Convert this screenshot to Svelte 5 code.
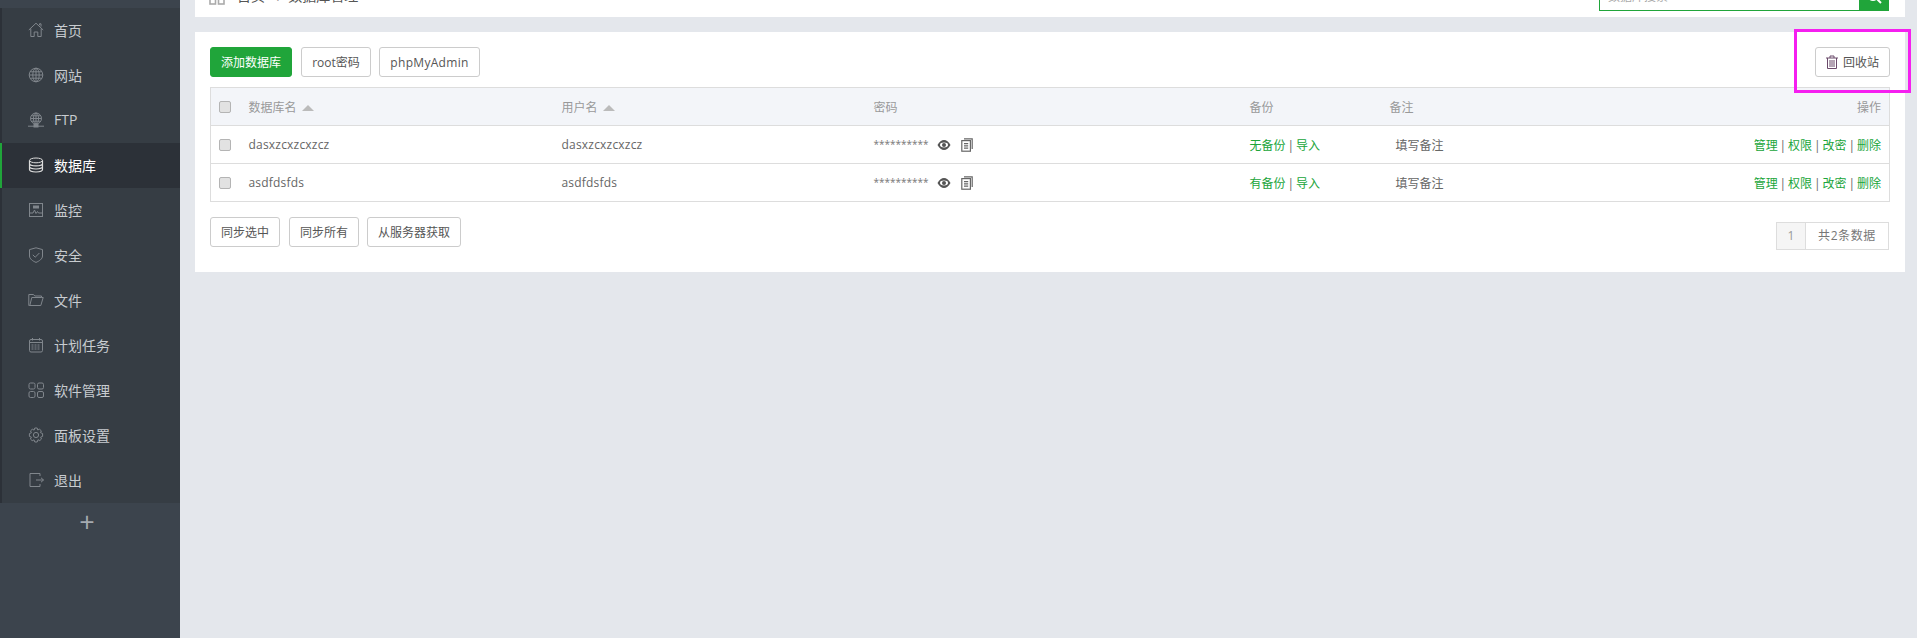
<script>
	const menu = [
		{ label: '首页', icon: 'home' },
		{ label: '网站', icon: 'globe' },
		{ label: 'FTP', icon: 'ftp' },
		{ label: '数据库', icon: 'db', active: true },
		{ label: '监控', icon: 'monitor' },
		{ label: '安全', icon: 'shield' },
		{ label: '文件', icon: 'folder' },
		{ label: '计划任务', icon: 'calendar' },
		{ label: '软件管理', icon: 'apps' },
		{ label: '面板设置', icon: 'gear' },
		{ label: '退出', icon: 'exit' }
	];

	const rows = [
		{ name: 'dasxzcxzcxzcz', user: 'dasxzcxzcxzcz', backup: '无备份' },
		{ name: 'asdfdsfds', user: 'asdfdsfds', backup: '有备份' }
	];

	const actions = ['管理', '权限', '改密', '删除'];
</script>

<div class="page">
	<aside class="sidebar">
		<nav class="menu">
			{#each menu as item (item.label)}
				<a class="menu-item" class:active={item.active} href="#top">
					<svg class="menu-icon" viewBox="0 0 16 16" width="16" height="16" fill="none" stroke="currentColor" stroke-width="1">
						{#if item.icon === 'home'}
							<path d="M0.8 8 8 1.2 15.2 8M2.8 6.6V14.5H6.2V10H9.8V14.5H13.2V6.6M11.5 3.2V1.8H13V4.6" />
						{:else if item.icon === 'globe'}
							<circle cx="8" cy="8" r="6.8" />
							<ellipse cx="8" cy="8" rx="3.2" ry="6.8" />
							<path d="M1.2 8H14.8M2.2 4.8H13.8M2.2 11.2H13.8M8 1.2V14.8" />
						{:else if item.icon === 'ftp'}
							<circle cx="8" cy="6.5" r="5.5" />
							<ellipse cx="8" cy="6.5" rx="2.6" ry="5.5" />
							<path d="M2.5 6.5H13.5M3.4 3.8H12.6M3.4 9.2H12.6M8 1V12M0 14.2H16" />
							<rect x="6" y="12.4" width="4" height="2.6" fill="currentColor" />
						{:else if item.icon === 'db'}
							<ellipse cx="8" cy="3.4" rx="6.5" ry="2.4" />
							<path d="M1.5 3.4V12.6C1.5 14 4.4 15 8 15S14.5 14 14.5 12.6V3.4M1.5 6.5C1.5 7.9 4.4 8.9 8 8.9S14.5 7.9 14.5 6.5M1.5 9.6C1.5 11 4.4 12 8 12S14.5 11 14.5 9.6" stroke-width="1.2" />
						{:else if item.icon === 'monitor'}
							<rect x="1.5" y="1.5" width="13" height="13" />
							<path d="M1.5 11H5L6.5 8 8 11.5 9.5 9.5 10.5 11H14.5" />
							<rect x="5" y="3.5" width="6" height="3" fill="currentColor" stroke="none" />
						{:else if item.icon === 'shield'}
							<path d="M8 0.8 14.5 2.6V9C14.5 12 11 14.2 8 15.4 5 14.2 1.5 12 1.5 9V2.6Z" />
							<path d="M4.8 7.8 7.2 10.2 11.4 6" />
						{:else if item.icon === 'folder'}
							<path d="M1.8 13.5H12.8L15.2 5.5H13.5V4H6.8L5.5 2.5H0.8V13.5ZM1.8 13.5 3.8 5.5H13.5" />
						{:else if item.icon === 'calendar'}
							<rect x="1.5" y="2.5" width="13" height="12.5" rx="1.5" />
							<path d="M1.5 5.5H14.5M4.5 1V3.5M11.5 1V3.5" />
							<path d="M3.5 8H12.5M3.5 10H12.5M3.5 12H12.5" stroke-dasharray="2 1" />
						{:else if item.icon === 'apps'}
							<rect x="1" y="1" width="6" height="6" rx="1.5" />
							<rect x="9.5" y="1" width="6" height="6" rx="1.5" />
							<rect x="1" y="9.5" width="6" height="6" rx="1.5" />
							<rect x="9.5" y="9.5" width="6" height="6" rx="1.5" />
						{:else if item.icon === 'gear'}
							<circle cx="8" cy="8" r="2.6" />
							<path d="M6.8 1H9.2L9.7 3 11.5 2.2 13.4 3.9 12.4 5.6 14.6 6.5V9.4L12.6 10.2 13.5 12 11.8 13.6 10 12.7 9.2 15H6.8L6 12.8 4.2 13.7 2.4 12 3.4 10.2 1.4 9.4V6.6L3.4 5.8 2.5 3.9 4.3 2.2 6.1 3.1Z" />
						{:else if item.icon === 'exit'}
							<path d="M12 4V1.5H2V14.5H12V12M8 8H15.5M13 5.8 15.5 8 13 10.2" />
						{/if}
					</svg>
					<span>{item.label}</span>
				</a>
			{/each}
		</nav>
		<div class="add-menu">+</div>
	</aside>

	<main class="content">
		<div class="topbar">
			<div class="crumbs">
				<svg viewBox="0 0 16 14" width="16" height="14" fill="none" stroke="#aaa" stroke-width="1.6">
					<rect x="1" y="1" width="5.5" height="12" />
					<rect x="9.5" y="1" width="5.5" height="12" />
				</svg>
				<span class="crumb">首页</span>
				<span class="crumb-sep">/</span>
				<span class="crumb">数据库管理</span>
			</div>
			<div class="search">
				<input type="text" placeholder="数据库搜索" />
				<button aria-label="搜索">
					<svg viewBox="0 0 16 16" width="16" height="16" fill="none" stroke="#fff" stroke-width="2">
						<circle cx="7" cy="7" r="5" />
						<path d="M10.5 10.5 15 15" />
					</svg>
				</button>
			</div>
		</div>

		<section class="card">
			<div class="toolbar">
				<button class="btn primary">添加数据库</button>
				<button class="btn root">root密码</button>
				<button class="btn pma">phpMyAdmin</button>
				<button class="btn recycle">
					<svg viewBox="0 0 12 14" width="12" height="14" fill="none" stroke="#6a4a6a" stroke-width="1">
						<path d="M0 3H12M4 3V1H8V3M1.5 3V13.5H10.5V3M4 5V12M6 5V12M8 5V12" />
					</svg>
					回收站
				</button>
			</div>

			<table>
				<thead>
					<tr>
						<th class="col-check"><input type="checkbox" /></th>
						<th class="col-name">数据库名 <i class="sort"></i></th>
						<th class="col-user">用户名 <i class="sort"></i></th>
						<th class="col-pass">密码</th>
						<th class="col-backup">备份</th>
						<th class="col-note">备注</th>
						<th class="col-ops">操作</th>
					</tr>
				</thead>
				<tbody>
					{#each rows as row (row.name)}
						<tr>
							<td><input type="checkbox" /></td>
							<td class="latin">{row.name}</td>
							<td class="latin">{row.user}</td>
							<td>
								<div class="pass">
									<span class="stars">**********</span>
									<svg viewBox="0 0 14 12" width="14" height="12">
										<path d="M0.5 6C2.5 2.5 4.5 1 7 1S11.5 2.5 13.5 6C11.5 9.5 9.5 11 7 11S2.5 9.5 0.5 6Z" fill="#555" />
										<ellipse cx="7" cy="6" rx="4" ry="2.4" fill="#fff" />
										<circle cx="7" cy="6" r="2" fill="#555" />
									</svg>
									<svg class="copy" viewBox="0 0 12 14" width="12" height="14" fill="none" stroke="#666" stroke-width="1.2">
										<path d="M3 0.8H11.2V11" />
										<rect x="0.8" y="2.6" width="8.6" height="10.6" fill="#fff" />
										<path d="M3 5.6H7.2M3 7.9H7.2M3 10.2H7.2" />
									</svg>
								</div>
							</td>
							<td><a href="#top">{row.backup}</a> | <a href="#top">导入</a></td>
							<td class="note">填写备注</td>
							<td class="ops">
								{#each actions as action, i (action)}
									{#if i > 0}{' | '}{/if}<a href="#top">{action}</a>
								{/each}
							</td>
						</tr>
					{/each}
				</tbody>
			</table>

			<div class="footer">
				<div class="sync">
					<button class="btn sync-btn first">同步选中</button>
					<button class="btn sync-btn">同步所有</button>
					<button class="btn fetch">从服务器获取</button>
				</div>
				<div class="pager">
					<span class="current">1</span>
					<span class="total">共2条数据</span>
				</div>
			</div>
		</section>
	</main>

	<!-- annotation drawn on top of the screenshot -->
	<div class="highlight"></div>
</div>

<style>
	:global(body) {
		margin: 0;
		background: #e4e7ec;
	}

	.page {
		position: relative;
		display: grid;
		grid-template-columns: 180px 1fr;
		height: 638px;
		overflow: hidden;
		font-family: 'Open Sans', 'Noto Sans CJK SC', sans-serif;
		font-size: 12px;
		color: #666;
	}

	.sidebar {
		background: #3c444d;
		padding-top: 8px;
	}

	.menu {
		display: flex;
		flex-direction: column;
		background: #363d44;
		border-left: 2px solid #2c3138;
	}

	.menu-item {
		display: flex;
		align-items: center;
		gap: 10px;
		height: 45px;
		box-sizing: border-box;
		padding: 0 0 2px 26px;
		color: #c8ccd0;
		font-size: 14px;
		text-decoration: none;
	}

	.menu-icon {
		color: #80868c;
		flex: none;
	}

	.menu-item.active {
		background: #2c3138;
		color: #fff;
		margin-left: -2px;
		border-left: 2px solid #20a53a;
	}

	.menu-item.active .menu-icon {
		color: #dcdcdc;
	}

	.add-menu {
		text-align: center;
		margin-top: 1px;
		padding-right: 6px;
		font-size: 27px;
		line-height: 36px;
		color: #a5abb1;
	}

	.content {
		padding: 0 12px 0 15px;
	}

	.topbar {
		display: flex;
		justify-content: space-between;
		align-items: flex-end;
		height: 17px;
		padding: 0 16px 6px 14px;
		box-sizing: border-box;
		background: #fff;
		overflow: hidden;
		margin-bottom: 15px;
	}

	.crumbs {
		display: flex;
		align-items: center;
		flex: none;
		gap: 12px;
		margin-bottom: 2px;
		height: 28px;
		font-size: 14px;
		color: #555;
	}

	.crumbs svg {
		margin-top: 6px;
	}

	.crumb-sep {
		color: #999;
		margin-right: -6px;
	}

	.search {
		display: flex;
		flex: none;
		width: 290px;
		height: 30px;
		box-sizing: border-box;
		border: 1px solid #20a53a;
	}

	.search input {
		flex: 1;
		min-width: 0;
		border: 0;
		padding: 0 8px;
		font: inherit;
		outline: none;
	}

	.search input::placeholder {
		color: #aaa;
	}

	.search button {
		width: 29px;
		border: 0;
		padding: 0;
		background: #20a53a;
		display: flex;
		align-items: center;
		justify-content: center;
	}

	.card {
		background: #fff;
		height: 240px;
		box-sizing: border-box;
		padding: 15px;
	}

	.toolbar {
		display: flex;
		gap: 8px;
		margin-bottom: 10px;
	}

	.btn {
		height: 30px;
		box-sizing: border-box;
		background: #fff;
		border: 1px solid #ccc;
		border-radius: 3px;
		padding: 0;
		font: inherit;
		color: #555;
	}

	.btn.primary {
		width: 82px;
		background: #20a53a;
		border-color: #20a53a;
		color: #fff;
		margin-right: 1px;
	}

	.btn.root {
		width: 70px;
	}

	.btn.pma {
		width: 101px;
		letter-spacing: 0.3px;
	}

	.btn.recycle {
		width: 75px;
		margin-left: auto;
		display: flex;
		align-items: center;
		justify-content: center;
		gap: 5px;
	}

	table {
		width: 1680px;
		table-layout: fixed;
		border-collapse: collapse;
		border: 1px solid #ddd;
	}

	th,
	td {
		height: 38px;
		padding: 0 10px 0 11px;
		box-sizing: border-box;
		text-align: left;
		border-bottom: 1px solid #ddd;
		font-weight: normal;
		word-spacing: -1.2px;
	}

	th {
		background: #f3f5f9;
		color: #999;
		word-spacing: 0;
	}

	.latin {
		letter-spacing: 0.2px;
	}

	.col-check {
		width: 27px;
		padding: 0 0 0 8px;
	}

	td:first-child {
		padding: 0 0 0 8px;
	}

	.col-name {
		width: 313px;
	}

	.col-user {
		width: 312px;
	}

	.col-pass {
		width: 376px;
	}

	.col-backup {
		width: 140px;
	}

	.col-note {
		width: 200px;
	}

	th.col-ops,
	td.ops {
		text-align: right;
		padding-right: 8px;
	}

	td.note {
		padding-left: 17px;
	}

	input[type='checkbox'] {
		appearance: none;
		display: block;
		width: 12px;
		height: 12px;
		margin: 0;
		box-sizing: border-box;
		background: #e2e2e2;
		border: 1px solid #b4b4b4;
		border-radius: 2px;
	}

	.sort {
		display: inline-block;
		width: 0;
		height: 0;
		margin-left: 2px;
		border-left: 6px solid transparent;
		border-right: 6px solid transparent;
		border-bottom: 6px solid #bbb;
		vertical-align: 1px;
	}

	.pass {
		display: flex;
		align-items: center;
	}

	.stars {
		width: 63px;
		font-size: 10px;
		line-height: 12px;
		padding-bottom: 2px;
		color: #777;
	}

	.copy {
		margin-left: 10px;
	}

	td a {
		color: #20a53a;
		text-decoration: none;
	}

	.footer {
		display: flex;
		justify-content: space-between;
		align-items: flex-start;
		margin-top: 15px;
	}

	.sync {
		display: flex;
		gap: 8px;
	}

	.sync-btn {
		width: 70px;
	}

	.sync-btn.first {
		margin-right: 1px;
	}

	.fetch {
		width: 94px;
	}

	.pager {
		display: flex;
		margin-top: 5px;
		margin-right: 1px;
		height: 28px;
		box-sizing: border-box;
		border: 1px solid #ddd;
		line-height: 26px;
	}

	.current {
		width: 28px;
		text-align: center;
		background: #f5f5f5;
		border-right: 1px solid #ddd;
		color: #999;
	}

	.total {
		width: 82px;
		text-align: center;
		letter-spacing: 0.6px;
		color: #777;
	}

	.highlight {
		position: absolute;
		left: 1794px;
		top: 29px;
		width: 117px;
		height: 64px;
		box-sizing: border-box;
		border: 3px solid #f51ff0;
		pointer-events: none;
	}
</style>
